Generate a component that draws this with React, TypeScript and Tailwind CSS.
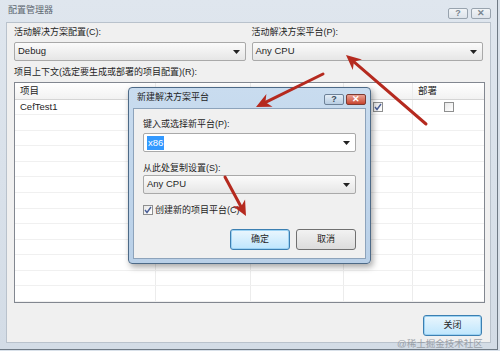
import React from 'react';

const font = "font-['Liberation_Sans','Noto_Sans_CJK_SC',sans-serif]";

function Combo({ value, selected, className }: { value: string; selected?: boolean; className: string }) {
  return (
    <div
      className={`flex items-center justify-between h-[19px] rounded-[2px] border border-[#a9a9a9] pl-[3px] pr-[5px] text-[9.5px] text-[#1e1e1e] ${
        selected ? 'bg-white' : 'bg-gradient-to-b from-[#fbfbfb] to-[#e6e6e6]'
      } ${className}`}
    >
      {selected ? (
        <span className="bg-[#3399ff] text-white px-[1px] leading-[14px]">{value}</span>
      ) : (
        <span>{value}</span>
      )}
      <svg width="7" height="4" viewBox="0 0 7 4">
        <path d="M0 0h7L3.5 4z" fill="#222" />
      </svg>
    </div>
  );
}

function CheckBox({ checked, className = '' }: { checked?: boolean; className?: string }) {
  return (
    <div className={`w-[10px] h-[10px] border border-[#8e8f8f] bg-gradient-to-br from-[#e8e8e8] to-white flex items-center justify-center ${className}`}>
      {checked && (
        <svg width="8" height="8" viewBox="0 0 8 8">
          <path d="M1 4l2 2.5L7 1" stroke="#4a5f97" strokeWidth="1.4" fill="none" />
        </svg>
      )}
    </div>
  );
}

function CaptionButton({ kind, active }: { kind: 'help' | 'close'; active?: boolean }) {
  const base = active
    ? kind === 'close'
      ? 'bg-gradient-to-b from-[#e8a093] to-[#c7432e] border-[#7d3b32] text-white'
      : 'bg-gradient-to-b from-[#e4edf6] to-[#b8cde2] border-[#6d8197] text-[#3b4a5b]'
    : 'bg-gradient-to-b from-[#f1f4f7] to-[#dde3ea] border-[#98a3ae] text-[#7a8590]';
  return (
    <div className={`w-[20px] h-[11px] rounded-[2px] border flex items-center justify-center text-[9px] leading-none font-bold ${base}`}>
      {kind === 'help' ? '?' : '✕'}
    </div>
  );
}

const cols = ['w-[141px]', 'w-[95px]', 'w-[93px]', 'w-[69px]', 'flex-1'];

function GridRow({ children, header }: { children?: React.ReactNode[]; header?: boolean }) {
  return (
    <div className={`flex ${header ? 'h-[17px] bg-gradient-to-b from-white to-[#f2f2f2] border-b border-[#d5d5d5]' : 'h-[16px] border-b border-[#f0f0f0]'}`}>
      {cols.map((c, i) => (
        <div
          key={i}
          className={`${c} flex items-center ${i < 4 ? 'border-r border-[#ececec]' : ''} ${
            header || i === 0 ? 'pl-[5px]' : 'justify-center'
          } text-[9.5px] text-[#1e1e1e]`}
        >
          {children?.[i]}
        </div>
      ))}
    </div>
  );
}

function Arrow({ x1, y1, x2, y2 }: { x1: number; y1: number; x2: number; y2: number }) {
  const a = Math.atan2(y2 - y1, x2 - x1);
  const len = 15;
  const w = 7;
  const bx = x2 - Math.cos(a) * len;
  const by = y2 - Math.sin(a) * len;
  const nx = -Math.sin(a);
  const ny = Math.cos(a);
  const mx = x2 - Math.cos(a) * len * 0.7;
  const my = y2 - Math.sin(a) * len * 0.7;
  const pts = `${x2},${y2} ${bx + nx * w},${by + ny * w} ${mx},${my} ${bx - nx * w},${by - ny * w}`;
  return (
    <g>
      <line x1={x1} y1={y1} x2={mx} y2={my} stroke="#b52a1f" strokeWidth="3" strokeLinecap="round" />
      <polygon points={pts} fill="#b52a1f" />
    </g>
  );
}

const label = 'text-[9px] text-[#1e1e1e] leading-[12px]';

export default function App() {
  const rows = Array.from({ length: 12 });
  return (
    <div className={`relative w-[500px] h-[351px] overflow-hidden bg-[#d9e1ea] ${font}`}>
      <div className="w-[498px] h-[350px] border-r border-b border-[#6f7a85] bg-gradient-to-b from-[#dfe6ee] to-[#d3dce6] flex flex-col">
        {/* title bar */}
        <div className="h-[22px] flex items-center justify-between pl-[8px] pr-[6px]">
          <span className="text-[9px] text-[#5d6670]">配置管理器</span>
          <div className="flex gap-[3px] mt-[4px]">
            <CaptionButton kind="help" />
            <CaptionButton kind="close" />
          </div>
        </div>
        {/* client */}
        <div className="flex-1 mx-[6px] mb-[6px] bg-[#f0f0f0] border border-[#b9c2cc] px-[7px] pt-[3px] flex flex-col">
          <div className="flex gap-[6px]">
            <div className="w-[233px] flex flex-col">
              <span className={label}>活动解决方案配置(C):</span>
              <Combo value="Debug" className="mt-[4px]" />
            </div>
            <div className="w-[233px] flex flex-col">
              <span className={label}>活动解决方案平台(P):</span>
              <Combo value="Any CPU" className="mt-[4px]" />
            </div>
          </div>
          <span className={`${label} mt-[5px]`}>项目上下文(选定要生成或部署的项目配置)(R):</span>
          <div className="mt-[4px] w-[471px] h-[221px] border border-[#828790] bg-white flex flex-col overflow-hidden">
            <GridRow header>{['项目', '', '', '', '部署']}</GridRow>
            <GridRow>{['CefTest1', '', '', <CheckBox key="b" checked />, <CheckBox key="d" />]}</GridRow>
            {rows.map((_, i) => (
              <GridRow key={i} />
            ))}
          </div>
          <div className="flex-1 flex items-start justify-end pt-[12px] pr-[1px]">
            <div className="w-[59px] h-[21px] rounded-[3px] border border-[#3c7fb1] bg-gradient-to-b from-[#eaf6fd] to-[#bee6fd] shadow-[inset_0_0_0_1px_#9cd2f3] flex items-center justify-center text-[9px] text-[#1e1e1e]">
              关闭
            </div>
          </div>
        </div>
      </div>

      {/* watermark */}
      <div className="absolute left-[397px] top-[338px] text-[9.5px] leading-[11px] text-[#9aa0a8]">@稀土掘金技术社区</div>

      {/* dialog */}
      <div className="absolute left-[128px] top-[87px] w-[243px] h-[177px] rounded-[4px] border border-[#4d6a87] bg-gradient-to-b from-[#c9dcef] to-[#b9d0e8] shadow-[2px_3px_6px_rgba(0,0,0,0.35)] flex flex-col">
        <div className="h-[20px] flex items-center justify-between pl-[8px] pr-[4px]">
          <span className="text-[9px] text-[#1e1e1e]">新建解决方案平台</span>
          <div className="flex gap-[2px] mt-[3px]">
            <CaptionButton kind="help" active />
            <CaptionButton kind="close" active />
          </div>
        </div>
        <div className="flex-1 mx-[4px] mb-[4px] bg-[#f0f0f0] border border-[#8da3bb] px-[9px] pt-[9px] flex flex-col">
          <span className={label}>键入或选择新平台(P):</span>
          <Combo value="x86" selected className="mt-[3px]" />
          <span className={`${label} mt-[10px]`}>从此处复制设置(S):</span>
          <Combo value="Any CPU" className="mt-[1px]" />
          <div className="flex items-center gap-[2px] mt-[10px]">
            <CheckBox checked />
            <span className={label}>创建新的项目平台(C)</span>
          </div>
          <div className="flex justify-end gap-[6px] mt-[13px]">
            <div className="w-[60px] h-[21px] rounded-[3px] border border-[#3c7fb1] bg-gradient-to-b from-[#eaf6fd] to-[#bee6fd] shadow-[inset_0_0_0_1px_#9cd2f3] flex items-center justify-center text-[9px] text-[#1e1e1e]">
              确定
            </div>
            <div className="w-[60px] h-[21px] rounded-[3px] border border-[#707070] bg-gradient-to-b from-[#f2f2f2] to-[#dcdcdc] flex items-center justify-center text-[9px] text-[#1e1e1e]">
              取消
            </div>
          </div>
        </div>
      </div>

      {/* red arrows */}
      <svg className="absolute inset-0 pointer-events-none" width="500" height="351">
        <Arrow x1={426} y1={124} x2={346} y2={55} />
        <Arrow x1={323} y1={74} x2={256} y2={107} />
        <Arrow x1={225} y1={177} x2={246} y2={216} />
      </svg>
    </div>
  );
}
